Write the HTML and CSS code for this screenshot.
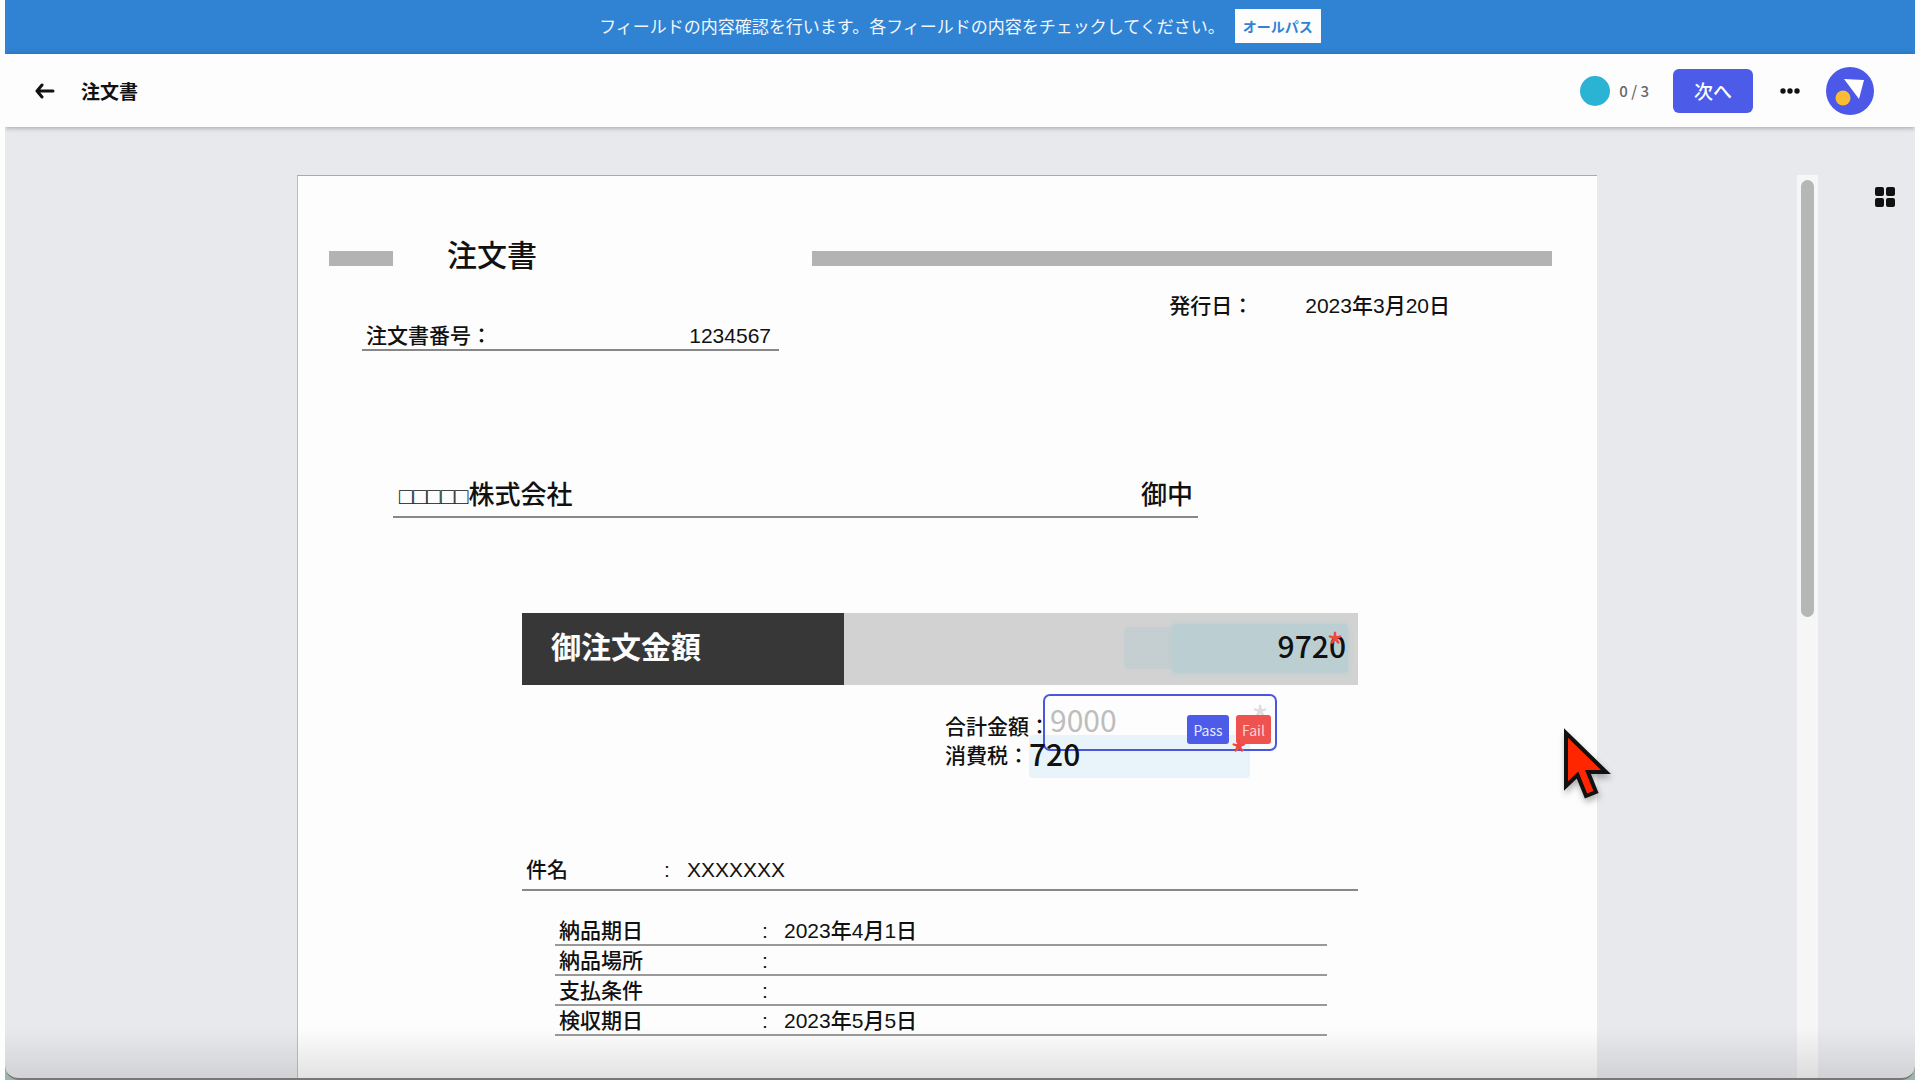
FILE: index.html
```html
<!DOCTYPE html>
<html lang="ja">
<head>
    <meta charset="UTF-8">
    <meta name="viewport" content="width=device-width, initial-scale=1.0">
    <title>注文書</title>
    <link rel="stylesheet" href="styles.css">
</head>
<body>
    <div class="window">
        <div class="banner">
            <p class="banner-text">フィールドの内容確認を行います。各フィールドの内容をチェックしてください。</p>
            <button type="button" class="all-pass">オールパス</button>
        </div>

        <header class="toolbar">
            <a href="#" class="back" aria-label="戻る">
                <svg width="20" height="16" viewBox="0 0 20 16" fill="none" stroke="#111" stroke-width="3" stroke-linecap="round" stroke-linejoin="round">
                    <path d="M18 8H2M7 2L2 8l5 6"/>
                </svg>
            </a>
            <h1 class="toolbar-title">注文書</h1>
            <span class="status-dot"></span>
            <span class="count">0 / 3</span>
            <button type="button" class="next">次へ</button>
            <button type="button" class="icon-button" aria-label="メニュー">
                <svg width="20" height="6" viewBox="0 0 20 6" fill="#111">
                    <circle cx="3" cy="3" r="2.7"/>
                    <circle cx="10" cy="3" r="2.7"/>
                    <circle cx="17" cy="3" r="2.7"/>
                </svg>
            </button>
            <button type="button" class="icon-button avatar" aria-label="アカウント">
                <svg width="48" height="48" viewBox="0 0 48 48">
                    <circle cx="24" cy="24" r="24" fill="#4b58e8"/>
                    <path d="M18 12l20 1-5 19z" fill="#fff"/>
                    <circle cx="17" cy="31" r="7.5" fill="#fcbc32"/>
                </svg>
            </button>
        </header>

        <main class="workspace">
            <article class="paper">
                <div class="heading">
                    <span class="bar"></span>
                    <h2 class="heading-title">注文書</h2>
                    <span class="bar"></span>
                </div>
                <div class="issued"><span>発行日：</span><span>2023年3月20日</span></div>
                <div class="order-number"><span>注文書番号：</span><span>1234567</span></div>
                <div class="company">
                    <span><span class="boxes">□□□□□</span>株式会社</span>
                    <span>御中</span>
                </div>

                <div class="amount">
                    <label class="amount-label" for="amount">御注文金額</label>
                    <div class="amount-value">
                        <span class="mark"></span>
                        <span class="mark mark-wide"></span>
                        <input type="text" id="amount" class="field amount-field" value="9720">
                        <span class="star star-amount">*</span>
                    </div>
                </div>

                <div class="totals">
                    <label for="total">合計金額：</label>
                    <label for="tax">消費税：</label>
                    <span class="mark mark-tax"></span>
                    <div class="check">
                        <input type="text" id="total" class="field check-field" value="9000">
                        <span class="star star-check">*</span>
                        <button type="button" class="pass">Pass</button>
                        <button type="button" class="fail">Fail</button>
                    </div>
                    <input type="text" id="tax" class="field tax-field" value="720">
                    <span class="star star-tax">*</span>
                </div>

                <div class="subject">
                    <span>件名</span><span>:</span><span>XXXXXXX</span>
                </div>
                <table class="terms">
                    <tbody>
                        <tr><th>納品期日</th><td class="colon">:</td><td>2023年4月1日</td></tr>
                        <tr><th>納品場所</th><td class="colon">:</td><td></td></tr>
                        <tr><th>支払条件</th><td class="colon">:</td><td></td></tr>
                        <tr><th>検収期日</th><td class="colon">:</td><td>2023年5月5日</td></tr>
                    </tbody>
                </table>
            </article>
            <div class="track"><div class="thumb"></div></div>
            <aside class="side">
                <button type="button" class="icon-button" aria-label="一覧">
                    <svg width="20" height="20" viewBox="0 0 20 20" fill="#111">
                        <rect width="9" height="9" rx="2"/>
                        <rect x="11" width="9" height="9" rx="2"/>
                        <rect y="11" width="9" height="9" rx="2"/>
                        <rect x="11" y="11" width="9" height="9" rx="2"/>
                    </svg>
                </button>
            </aside>
        </main>
        <div class="shade"></div>
    </div>

    <svg class="pointer" width="56" height="80" viewBox="0 0 56 80">
        <path d="M6 5V58L17.500 47L26 68L36 64L28 44H46Z" fill="#ff2600" stroke="#111" stroke-width="4"/>
    </svg>
</body>
</html>
```
FILE: styles.css
```css
* {
    box-sizing: border-box;
}
html {
    background: #fdfdfd;
}
body {
    margin: 0 5px;
    height: 100vh;
    overflow: hidden;
    background: #9db5aa;
    color: #111;
    font-family: "Liberation Sans", "Noto Sans CJK JP", sans-serif;
    font-size: 21px;
    line-height: 24px;
}
h1, h2, p {
    margin: 0;
}
button {
    padding: 0;
    border: none;
    font-family: "Noto Sans CJK JP", sans-serif;
    cursor: pointer;
}
.window {
    position: relative;
    display: flex;
    flex-direction: column;
    height: 100%;
    overflow: hidden;
    background: #e7e9ec;
    border-bottom: 2px solid #777;
    border-radius: 0 0 14px 14px;
}

/* banner */
.banner {
    display: flex;
    justify-content: center;
    align-items: center;
    gap: 10px;
    height: 54px;
    padding-bottom: 3px;
    background: #3083d3;
    font-family: "Noto Sans CJK JP", sans-serif;
}
.banner-text {
    color: #f2f6fb;
    font-size: 17px;
}
.all-pass {
    width: 86px;
    height: 34px;
    background: #fdfdfd;
    color: #3083d3;
    font-size: 14px;
    font-weight: bold;
}

/* toolbar */
.toolbar {
    position: relative;
    display: flex;
    align-items: center;
    height: 73px;
    padding: 0 41px 0 30px;
    background: #fdfdfd;
    box-shadow: 0 1px 5px rgba(0, 0, 0, 0.3);
    font-family: "Noto Sans CJK JP", sans-serif;
}
.back {
    display: flex;
    margin-right: 26px;
}
.toolbar-title {
    flex: 1;
    font-size: 19px;
}
.status-dot {
    width: 30px;
    height: 30px;
    border-radius: 50%;
    background: #2bb3d3;
}
.count {
    margin: 0 24px 0 9px;
    color: #666;
    font-size: 15px;
    font-weight: 500;
}
.next {
    width: 80px;
    height: 44px;
    margin-right: 27px;
    border-radius: 6px;
    background: #4d5be9;
    color: #fff;
    font-size: 19px;
    font-weight: 500;
}
.icon-button {
    display: flex;
    background: none;
}
.avatar {
    margin-left: 26px;
}

/* workspace */
.workspace {
    flex: 1;
    display: grid;
    grid-template-columns: 292fr 1300fr 200fr 21px 97px;
    min-height: 0;
    padding-top: 48px;
}
.paper {
    grid-column: 2;
    background: #fdfdfd;
    border-top: 1px solid #aaa;
    border-left: 1px solid #bbb;
    font-weight: 500;
}
.track {
    grid-column: 4;
    padding: 5px 4px;
    background: #f6f6f6;
}
.thumb {
    height: 437px;
    border-radius: 7px;
    background: #b5b6b6;
}
.side {
    display: flex;
    align-items: flex-start;
    justify-content: flex-end;
    padding: 12px 20px;
}

/* document */
.heading {
    display: grid;
    grid-template-columns: 64px 311px 1fr;
    gap: 54px;
    align-items: center;
    height: 40px;
    margin: 62px 45px 0 31px;
}
.heading-title {
    padding-bottom: 4px;
    font-size: 30px;
    font-weight: 500;
}
.bar {
    height: 15px;
    background: #b3b3b3;
}
.issued {
    display: flex;
    justify-content: flex-end;
    gap: 52px;
    margin: 16px 147px 0 0;
}
.order-number {
    display: flex;
    justify-content: space-between;
    width: 417px;
    margin: 6px 0 0 64px;
    padding: 0 8px 1px 4px;
    border-bottom: 2px solid #888;
}
.company {
    display: flex;
    justify-content: space-between;
    height: 39px;
    margin: 128px 399px 0 95px;
    padding: 0 5px 0 6px;
    border-bottom: 2px solid #888;
    font-size: 26px;
    line-height: 32px;
}
.boxes {
    font-size: 23px;
}
.amount {
    display: grid;
    grid-template-columns: 322px 1fr;
    height: 72px;
    margin: 95px 239px 0 224px;
    background: #d2d2d2;
}
.amount-label {
    padding: 19px 29px;
    background: #373737;
    color: #fdfdfd;
    font-size: 30px;
    font-weight: bold;
    line-height: 32px;
}
.amount-value {
    position: relative;
}
.field {
    padding: 0;
    border: none;
    background: none;
    color: #111;
    font-family: "Noto Sans CJK JP", sans-serif;
    font-size: 30px;
    font-weight: 500;
    line-height: 44px;
}
.amount-field {
    position: relative;
    width: 100%;
    height: 64px;
    padding-right: 12px;
    text-align: right;
}
.mark {
    position: absolute;
    top: 14px;
    right: 140px;
    width: 94px;
    height: 42px;
    border-radius: 4px;
    background: #c5cfd1;
}
.mark-wide {
    top: 11px;
    right: 10px;
    width: 176px;
    height: 49px;
    background: #bbced1;
    box-shadow: 0 0 6px #bbced1;
}
.star {
    position: absolute;
    color: #f0483f;
    font-family: "Noto Sans CJK JP", sans-serif;
    font-size: 38px;
    font-weight: normal;
    line-height: 32px;
}
.star-amount {
    top: 17px;
    right: 14px;
}
.totals {
    position: relative;
    display: flex;
    flex-direction: column;
    gap: 5px;
    width: 413px;
    margin: 30px 239px 0 auto;
}
.check {
    position: absolute;
    top: -21px;
    left: 98px;
    display: flex;
    align-items: flex-end;
    gap: 7px;
    width: 234px;
    height: 57px;
    padding: 0 4px 5px 5px;
    border: 2px solid #4a57dd;
    border-radius: 7px;
}
.check-field {
    flex: 1;
    align-self: flex-start;
    width: 0;
    height: 46px;
    color: #bdbdbd;
    font-weight: normal;
}
.star-check {
    top: 7px;
    right: 6px;
    color: #ddd;
}
.pass, .fail {
    position: relative;
    width: 42px;
    height: 29px;
    border-radius: 3px;
    background: #4d5be9;
    color: #e8eaff;
    font-size: 14px;
}
.fail {
    width: 35px;
    background: #ee5350;
    color: #fbd5d5;
}
.mark-tax {
    top: 20px;
    left: 84px;
    width: 221px;
    height: 43px;
    background: #e9f4fa;
}
.tax-field {
    position: absolute;
    top: 16px;
    left: 84px;
    width: 80px;
    height: 44px;
}
.star-tax {
    top: 23px;
    left: 285px;
}
.subject {
    display: grid;
    grid-template-columns: 138px 23px 1fr;
    margin: 90px 239px 0 224px;
    padding: 0 0 7px 4px;
    border-bottom: 2px solid #888;
}
.terms {
    width: calc(100% - 527px);
    margin: 24px 0 0 257px;
    border-collapse: collapse;
    table-layout: fixed;
}
.terms th, .terms td {
    height: 30px;
    padding: 2px 0 0;
    border-bottom: 2px solid #999;
    font-weight: 500;
    text-align: left;
}
.terms th {
    width: 207px;
    padding-left: 4px;
}
.terms .colon {
    width: 22px;
}

/* overlays */
.shade {
    position: absolute;
    left: 0;
    right: 0;
    bottom: 0;
    height: 50px;
    background: linear-gradient(rgba(120, 120, 120, 0), rgba(120, 120, 120, 0.2));
    pointer-events: none;
}
.pointer {
    position: absolute;
    top: 728px;
    left: 1560px;
    filter: drop-shadow(1px 4px 3px rgba(0, 0, 0, 0.3));
}
```
